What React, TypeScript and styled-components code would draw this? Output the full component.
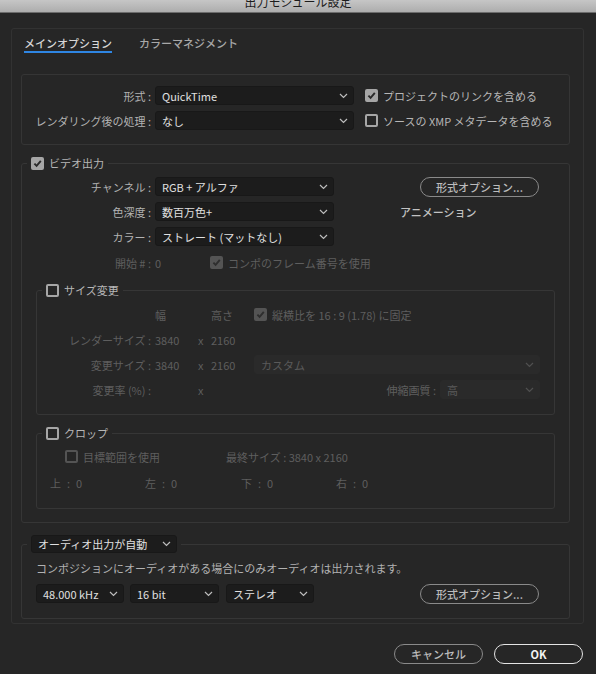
import React from "react";
import styled, { createGlobalStyle } from "styled-components";

const GlobalStyle = createGlobalStyle`
  html, body {
    margin: 0;
    padding: 0;
    background: #262626;
  }
  body {
    font-family: "Noto Sans CJK JP", "Noto Sans", sans-serif;
    font-size: 11px;
    color: #b2b2b2;
  }
  #root {
    width: 596px;
    height: 674px;
    overflow: hidden;
  }
`;

const TitleBar = styled.div`
  height: 12px;
  border-bottom: 1px solid #6c6c6c;
  background: linear-gradient(#c6c6c6, #adadad);
  display: flex;
  justify-content: center;
  align-items: flex-end;
  overflow: hidden;
`;

const TitleText = styled.span`
  font-size: 12px;
  line-height: 20px;
  color: #1c1c1c;
  flex-shrink: 0;
`;

const Panel = styled.div`
  margin: 15px 12px 0 11px;
  border: 1px solid #323232;
  border-radius: 3px;
  padding: 0 13px 4px 9px;
`;

const Tabs = styled.div`
  display: flex;
  gap: 27px;
  margin-left: 3px;
  padding-top: 6px;
`;

const Tab = styled.div<{ $active?: boolean }>`
  line-height: 16px;
  font-weight: 500;
  color: ${(p) => (p.$active ? "#d6d6d6" : "#a8a8a8")};
  border-bottom: 2px solid ${(p) => (p.$active ? "#2f86e3" : "transparent")};
`;

const Section = styled.div`
  margin-top: 21px;
  border: 1px solid #353535;
  border-radius: 3px;
  padding: 11px 0 14px 0;
  display: flex;
  flex-direction: column;
  gap: 6px;
`;

const Group = styled.fieldset<{ $mt: number; $mx?: number }>`
  margin: ${(p) => p.$mt}px ${(p) => p.$mx ?? 0}px 0;
  padding: 0;
  min-width: 0;
  border: 1px solid #363636;
  border-radius: 3px;
`;

const Legend = styled.legend`
  display: flex;
  align-items: center;
  gap: 5px;
  margin-left: 5px;
  padding: 0 4px;
  line-height: 16px;
  color: #bdbdbd;
`;

const GroupBody = styled.div<{ $pt: number; $pb: number; $pl?: number }>`
  display: flex;
  flex-direction: column;
  padding: ${(p) => p.$pt}px 0 ${(p) => p.$pb}px ${(p) => p.$pl ?? 0}px;
`;

const Row = styled.div<{ $mt?: number; $ml?: number }>`
  display: flex;
  align-items: center;
  height: 19px;
  margin-top: ${(p) => p.$mt ?? 0}px;
  margin-left: ${(p) => p.$ml ?? 0}px;
  white-space: nowrap;
`;

const Label = styled.span<{ $w: number; $dim?: boolean }>`
  width: ${(p) => p.$w}px;
  flex-shrink: 0;
  text-align: right;
  margin-right: 4px;
  color: ${(p) => (p.$dim ? "#5e5e5e" : "#b2b2b2")};
`;

const Cell = styled.span<{ $w: number; $dim?: boolean }>`
  width: ${(p) => p.$w}px;
  flex-shrink: 0;
  color: ${(p) => (p.$dim ? "#5e5e5e" : "#b2b2b2")};
`;

const Sep = styled.span`
  margin: 0 6px 0 6px;
`;

const Note = styled.span<{ $ml?: number; $strong?: boolean; $dim?: boolean }>`
  margin-left: ${(p) => p.$ml ?? 0}px;
  color: ${(p) => (p.$dim ? "#5e5e5e" : p.$strong ? "#c2c2c2" : "#b2b2b2")};
  font-weight: ${(p) => (p.$strong ? 500 : 400)};
`;

const SelectBox = styled.div<{ $w: number; $h?: number; $ml?: number; $disabled?: boolean }>`
  width: ${(p) => p.$w}px;
  height: ${(p) => p.$h ?? 19}px;
  margin-left: ${(p) => p.$ml ?? 0}px;
  box-sizing: border-box;
  flex-shrink: 0;
  display: flex;
  align-items: center;
  justify-content: space-between;
  padding: 0 5px 0 6px;
  background: ${(p) => (p.$disabled ? "#2a2a2a" : "#1c1c1c")};
  border: 1px solid ${(p) => (p.$disabled ? "#2a2a2a" : "#181818")};
  border-radius: 3px;
  color: ${(p) => (p.$disabled ? "#5a5a5a" : "#e0e0e0")};
  line-height: 16px;
`;

const CheckBox = styled.span<{ $checked?: boolean; $disabled?: boolean }>`
  width: 13px;
  height: 13px;
  box-sizing: border-box;
  flex-shrink: 0;
  border-radius: 2px;
  display: inline-flex;
  align-items: center;
  justify-content: center;
  border: 2px solid ${(p) => (p.$disabled ? "#545454" : "#a6a6a6")};
  background: ${(p) => (p.$checked ? (p.$disabled ? "#545454" : "#a6a6a6") : "transparent")};
`;

const CheckRow = styled.span<{ $ml?: number; $w?: number; $disabled?: boolean }>`
  display: inline-flex;
  align-items: center;
  gap: 5px;
  margin-left: ${(p) => p.$ml ?? 0}px;
  width: ${(p) => (p.$w ? `${p.$w}px` : "auto")};
  flex-shrink: 0;
  color: ${(p) => (p.$disabled ? "#5e5e5e" : "#b6b6b6")};
`;

const Pill = styled.button<{ $w: number; $ml?: number; $primary?: boolean }>`
  width: ${(p) => p.$w}px;
  height: 20px;
  margin-left: ${(p) => p.$ml ?? 0}px;
  flex-shrink: 0;
  padding: 0;
  border-radius: 10px;
  border: 1.5px solid ${(p) => (p.$primary ? "#e4e4e4" : "#8a8a8a")};
  background: transparent;
  color: ${(p) => (p.$primary ? "#f2f2f2" : "#bcbcbc")};
  font-family: inherit;
  font-size: 11px;
  font-weight: ${(p) => (p.$primary ? 700 : 500)};
  line-height: 16px;
`;

const Footer = styled.div`
  display: flex;
  justify-content: flex-end;
  gap: 11px;
  padding: 20px 13px 0 0;
`;

const Chevron = ({ dim }: { dim?: boolean }) => (
  <svg width="9" height="6" viewBox="0 0 9 6">
    <polyline
      points="1,1 4.5,4.5 8,1"
      fill="none"
      stroke={dim ? "#505050" : "#bdbdbd"}
      strokeWidth="1.2"
    />
  </svg>
);

const Tick = ({ dim }: { dim?: boolean }) => (
  <svg width="9" height="9" viewBox="0 0 9 9">
    <path
      d="M1.4 4.6 L3.6 6.8 L7.8 1.8"
      fill="none"
      stroke={dim ? "#2e2e2e" : "#2a2a2a"}
      strokeWidth="1.9"
    />
  </svg>
);

interface SelectProps {
  w: number;
  h?: number;
  ml?: number;
  disabled?: boolean;
  children: React.ReactNode;
}

const Select = ({ w, h, ml, disabled, children }: SelectProps) => (
  <SelectBox $w={w} $h={h} $ml={ml} $disabled={disabled}>
    <span>{children}</span>
    <Chevron dim={disabled} />
  </SelectBox>
);

interface CheckProps {
  checked?: boolean;
  disabled?: boolean;
  ml?: number;
  w?: number;
  children?: React.ReactNode;
}

const Check = ({ checked, disabled, ml, w, children }: CheckProps) => (
  <CheckRow $ml={ml} $w={w} $disabled={disabled}>
    <CheckBox $checked={checked} $disabled={disabled}>
      {checked && <Tick dim={disabled} />}
    </CheckBox>
    {children}
  </CheckRow>
);

const crops = [
  { name: "上", w: 95 },
  { name: "左", w: 96 },
  { name: "下", w: 95 },
  { name: "右", w: 60 },
];

const App = () => {
  return (
    <>
      <GlobalStyle />
      <TitleBar>
        <TitleText>出力モジュール設定</TitleText>
      </TitleBar>
      <Panel>
        <Tabs>
          <Tab $active>メインオプション</Tab>
          <Tab>カラーマネジメント</Tab>
        </Tabs>

        <Section>
          <Row>
            <Label $w={129}>形式 :</Label>
            <Select w={199}>QuickTime</Select>
            <Check checked ml={11}>
              プロジェクトのリンクを含める
            </Check>
          </Row>
          <Row>
            <Label $w={129}>レンダリング後の処理 :</Label>
            <Select w={199}>なし</Select>
            <Check ml={11}>ソースの XMP メタデータを含める</Check>
          </Row>
        </Section>

        <Group $mt={10}>
          <Legend>
            <Check checked>ビデオ出力</Check>
          </Legend>
          <GroupBody $pt={6} $pb={13}>
            <Row>
              <Label $w={129}>チャンネル :</Label>
              <Select w={179}>RGB + アルファ</Select>
              <Pill $w={119} $ml={86}>
                形式オプション...
              </Pill>
            </Row>
            <Row $mt={6}>
              <Label $w={129}>色深度 :</Label>
              <Select w={179}>数百万色+</Select>
              <Note $ml={66} $strong>
                アニメーション
              </Note>
            </Row>
            <Row $mt={6}>
              <Label $w={129}>カラー :</Label>
              <Select w={179}>ストレート (マットなし)</Select>
            </Row>
            <Row $mt={7}>
              <Label $w={129} $dim>
                開始 # :
              </Label>
              <Cell $w={55} $dim>
                0
              </Cell>
              <Check checked disabled>
                コンポのフレーム番号を使用
              </Check>
            </Row>

            <Group $mt={10} $mx={14}>
              <Legend>
                <Check>サイズ変更</Check>
              </Legend>
              <GroupBody $pt={7} $pb={15}>
                <Row>
                  <Label $w={114} />
                  <Cell $w={56} $dim>
                    幅
                  </Cell>
                  <Cell $w={43} $dim>
                    高さ
                  </Cell>
                  <Check checked disabled>
                    縦横比を 16 : 9 (1.78) に固定
                  </Check>
                </Row>
                <Row $mt={6}>
                  <Label $w={114} $dim>
                    レンダーサイズ :
                  </Label>
                  <Cell $w={43} $dim>
                    3840
                  </Cell>
                  <Cell $w={13} $dim>
                    x
                  </Cell>
                  <Cell $w={43} $dim>
                    2160
                  </Cell>
                </Row>
                <Row $mt={6}>
                  <Label $w={114} $dim>
                    変更サイズ :
                  </Label>
                  <Cell $w={43} $dim>
                    3840
                  </Cell>
                  <Cell $w={13} $dim>
                    x
                  </Cell>
                  <Cell $w={43} $dim>
                    2160
                  </Cell>
                  <Select w={286} disabled>
                    カスタム
                  </Select>
                </Row>
                <Row $mt={6}>
                  <Label $w={114} $dim>
                    変更率 (%) :
                  </Label>
                  <Cell $w={43} />
                  <Cell $w={13} $dim>
                    x
                  </Cell>
                  <Cell $w={43} />
                  <Label $w={182} $dim>
                    伸縮画質 :
                  </Label>
                  <Select w={100} disabled>
                    高
                  </Select>
                </Row>
              </GroupBody>
            </Group>

            <Group $mt={10} $mx={14}>
              <Legend>
                <Check>クロップ</Check>
              </Legend>
              <GroupBody $pt={6} $pb={16}>
                <Row $ml={28}>
                  <Check disabled w={161}>
                    目標範囲を使用
                  </Check>
                  <Note $dim>最終サイズ : 3840 x 2160</Note>
                </Row>
                <Row $mt={7} $ml={13}>
                  {crops.map((c) => (
                    <Cell key={c.name} $w={c.w} $dim>
                      {c.name}
                      <Sep>:</Sep>0
                    </Cell>
                  ))}
                </Row>
              </GroupBody>
            </Group>
          </GroupBody>
        </Group>

        <Group $mt={12}>
          <Legend>
            <Select w={146} h={18}>
              オーディオ出力が自動
            </Select>
          </Legend>
          <GroupBody $pt={5} $pb={15} $pl={14}>
            <Row>
              <Note>コンポジションにオーディオがある場合にのみオーディオは出力されます。</Note>
            </Row>
            <Row $mt={7}>
              <Select w={88}>48.000 kHz</Select>
              <Select w={89} ml={6}>
                16 bit
              </Select>
              <Select w={88} ml={7}>
                ステレオ
              </Select>
              <Pill $w={119} $ml={106}>
                形式オプション...
              </Pill>
            </Row>
          </GroupBody>
        </Group>
      </Panel>

      <Footer>
        <Pill $w={89}>キャンセル</Pill>
        <Pill $w={89} $primary>
          OK
        </Pill>
      </Footer>
    </>
  );
};

export default App;
